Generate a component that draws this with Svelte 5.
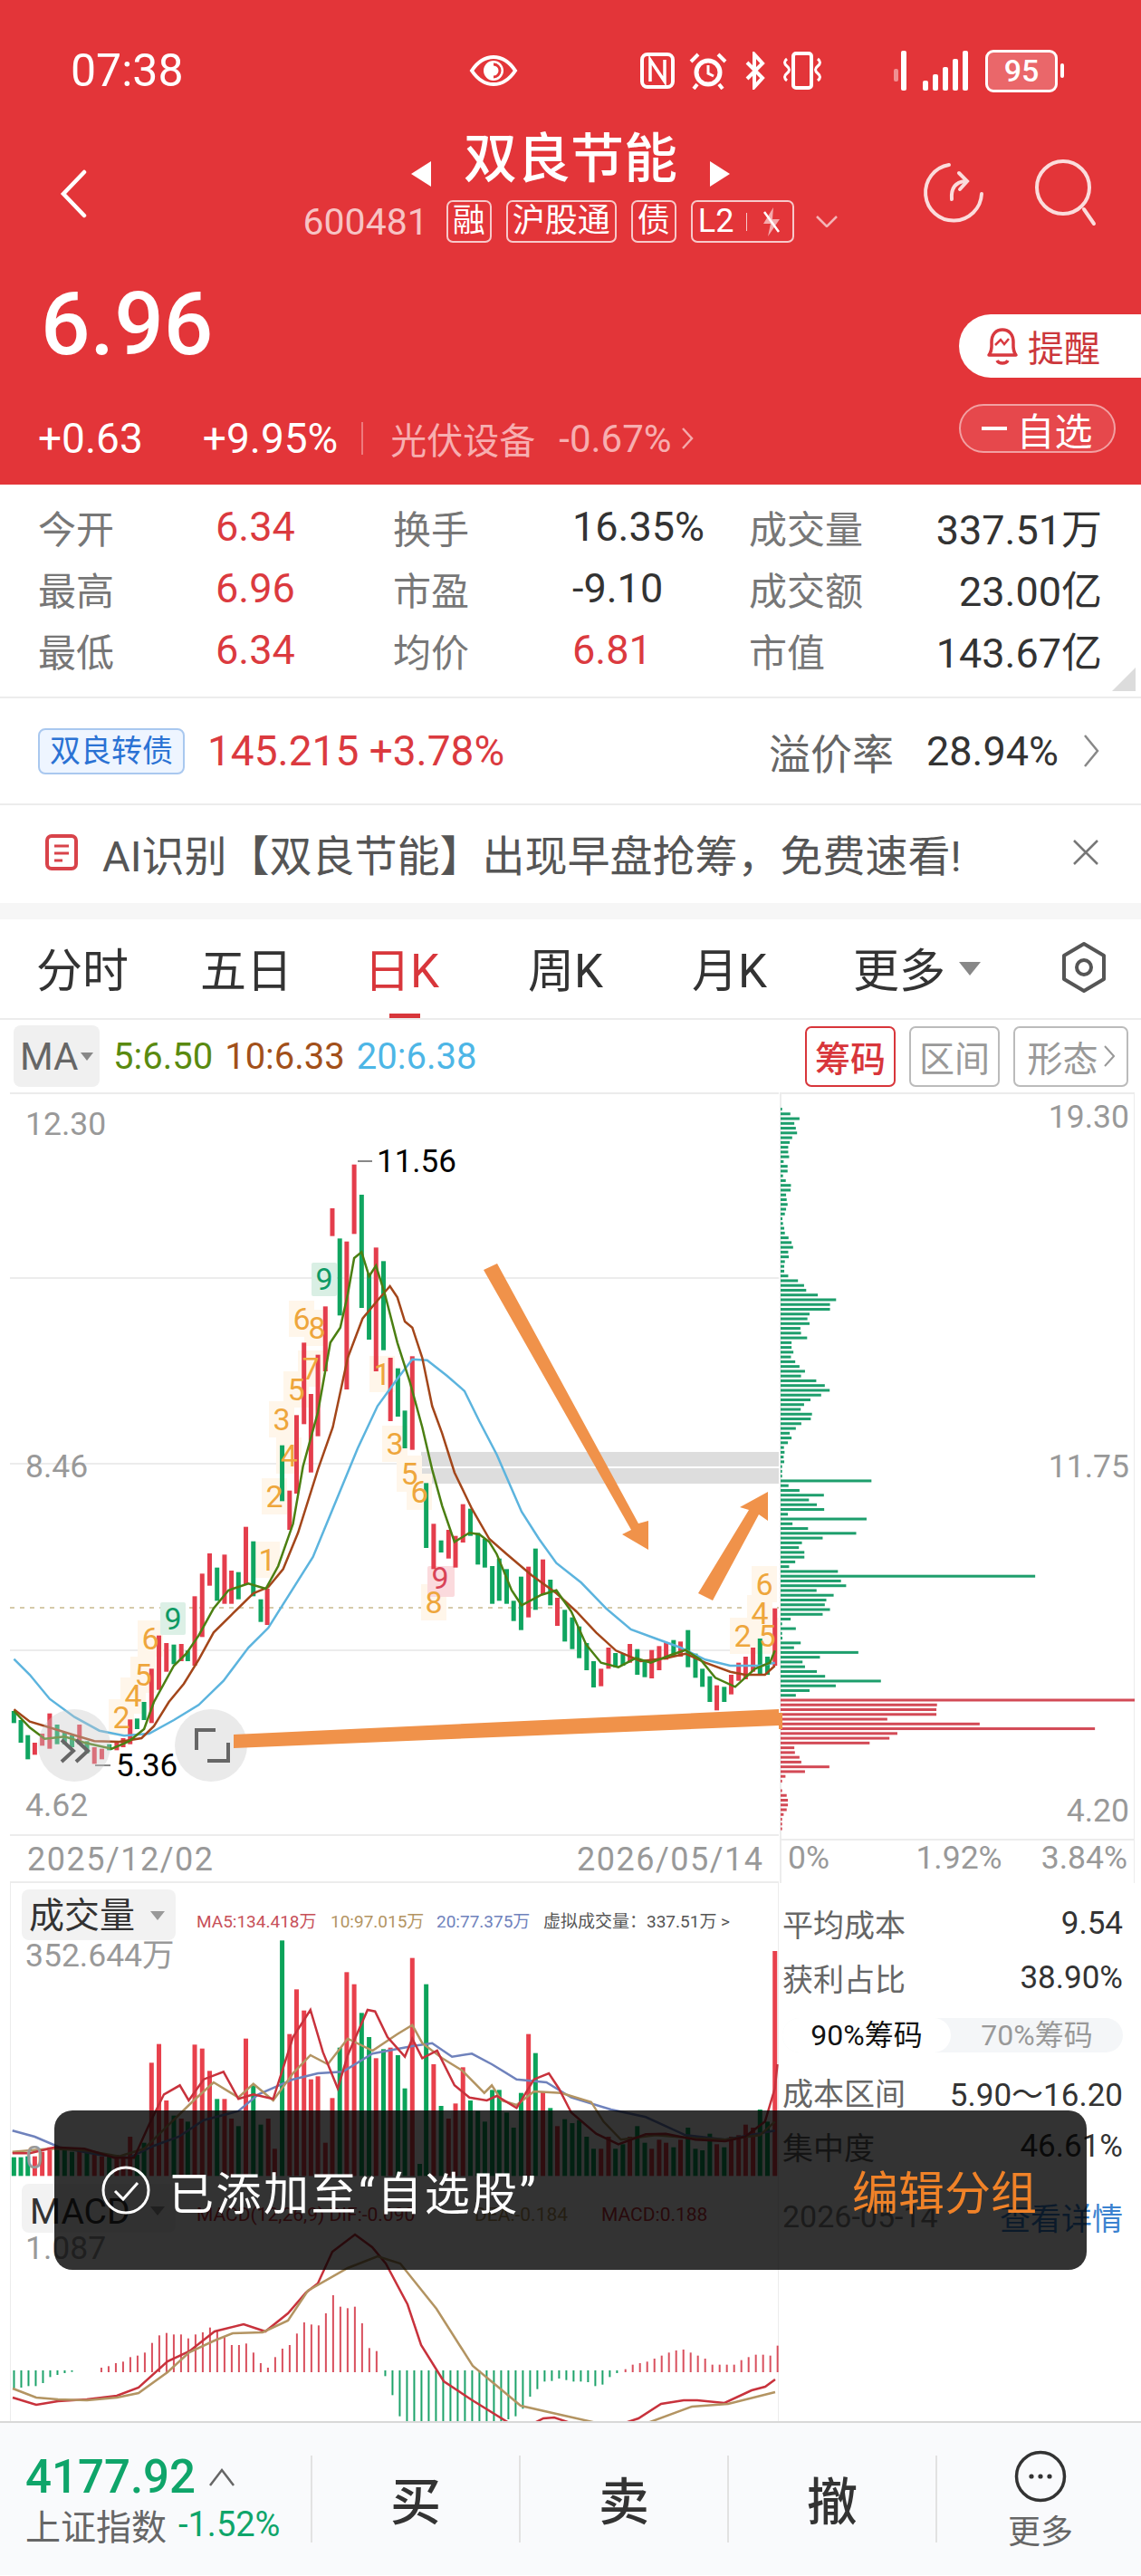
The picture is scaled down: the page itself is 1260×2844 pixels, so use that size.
<script>
	// chart data read off the reference. candle/volume x,y are kept in crop units and scaled below
	const XS = 1.823;
	const candleRaw =
		'g28,570,610 g42,600,675 g56,650,730 r70,675,715 r85,645,685 r100,578,695 g115,615,680 g130,640,680 g145,650,690 r160,615,680 g175,670,710 r190,690,745 r205,695,730 g220,680,700 r235,670,700 r248,660,690 r262,598,680 g276,595,630 g290,540,600 r305,430,610 r320,320,500 r335,345,440 g350,350,415 r365,348,405 g378,370,405 r392,190,420 r407,115,325 r422,48,155 g437,95,205 r452,52,215 r466,105,215 g480,110,200 r495,-40,150 g510,8,190 g525,200,275 r538,165,285 ' +
		'g568,-310,-125 r583,-160,-30 r597,-410,-150 r612,-650,-380 r626,-480,-220 r640,-610,-340 r655,-770,-555 r669,-1095,-1003 g684,-995,-740 r698,-985,-495 r713,-1240,-1010 g728,-1140,-765 g743,-880,-660 r757,-965,-555 g772,-920,-625 r786,-600,-390 g801,-565,-405 g815,-425,-300 r830,-605,-295 g858,-185,30 r873,-50,100 g888,5,45 r903,-30,65 r917,-10,95 r932,-115,12 g947,-100,-10 ' +
		'g962,-20,85 g976,0,95 g991,90,215 g1005,65,205 g1020,100,215 g1034,205,272 g1049,125,302 r1064,92,260 g1078,32,235 r1093,68,185 g1108,135,220 r1122,195,288 g1137,235,340 g1152,260,365 g1166,290,395 g1181,345,435 g1195,405,492 r1210,430,488 r1225,360,430 g1239,378,425 g1254,380,420 r1268,348,410 g1283,365,450 g1298,400,458 r1312,368,462 r1327,355,435 r1341,342,400 g1356,335,390 r1370,340,390 g1385,302,425 g1400,380,460 g1414,430,490 g1429,455,540 r1443,485,568 g1458,490,540 r1472,450,515 r1487,410,470 r1501,390,465 r1516,360,440 g1530,330,450 g1545,390,450 r1560,230,420';

	const candles = candleRaw.split(' ').map((s) => {
		const [a, b, c] = s.slice(1).split(',').map(Number);
		return { up: s[0] === 'r', x: a / XS - 2.5, y: 1700 + b / 3, h: (c - b) / 3 };
	});

	const kline = (pts) => pts.map(([x, y]) => `${(x / XS).toFixed(1)},${(1700 + y / 3).toFixed(1)}`).join(' ');
	const vline = (pts) => pts.map(([x, y]) => `${(x / XS).toFixed(1)},${(2080 + y / 3).toFixed(1)}`).join(' ');
	const plain = (pts) => pts.map((p) => p.join(',')).join(' ');

	const ma20 = kline([[28,398],[60,450],[100,530],[150,590],[200,635],[250,652],[300,645],[350,600],[400,550],[450,470],[500,360],[540,295],[580,190],[630,60],[670,-100],[720,-300],[760,-440],[800,-530],[830,-595],[860,-592],[900,-540],[935,-490],[965,-390],[1000,-280],[1050,-90],[1085,0],[1120,80],[1170,145],[1220,230],[1270,300],[1320,330],[1370,360],[1420,400],[1470,420],[1530,420],[1560,410]]);
	const ma10 = kline([[28,565],[60,605],[100,625],[150,650],[190,670],[240,672],[285,660],[310,620],[340,540],[370,480],[400,400],[430,310],[470,245],[510,180],[540,160],[570,100],[600,-20],[640,-230],[670,-370],[700,-600],[730,-730],[760,-790],[785,-837],[800,-800],[815,-720],[830,-700],[850,-600],[870,-440],[890,-350],[915,-220],[950,-100],[985,0],[1020,50],[1070,120],[1120,180],[1160,240],[1200,310],[1240,370],[1290,405],[1340,395],[1380,380],[1420,410],[1470,440],[1500,450],[1540,450],[1560,420]]);
	const ma5 = kline([[28,570],[60,625],[90,662],[130,655],[170,675],[225,695],[260,670],[290,630],[310,540],[350,420],[375,380],[400,320],[430,230],[460,170],[500,148],[535,165],[560,90],[590,-50],[610,-240],[640,-420],[665,-650],[685,-700],[700,-810],[713,-930],[728,-950],[743,-870],[757,-905],[775,-810],[800,-650],[825,-520],[850,-370],[870,-230],[890,-110],[915,10],[945,-20],[965,-15],[985,10],[1000,50],[1030,170],[1050,220],[1090,185],[1120,170],[1150,240],[1180,350],[1210,410],[1245,425],[1280,395],[1310,410],[1350,385],[1380,368],[1410,400],[1440,460],[1480,490],[1520,430],[1550,410],[1560,370]]);

	// sequence numbers sitting on the candles: [x, y, text]
	const marks = [
		[295,1723,'1'],[303,1653,'2'],[311,1568,'3'],[319,1608,'4'],[327,1535,'5'],[343,1512,'7'],[333,1457,'6'],[350,1467,'8'],
		[422,1518,'1'],[436,1595,'3'],[452,1628,'5'],[463,1648,'6'],[479,1770,'8'],
		[166,1810,'6'],[158,1850,'5'],[147,1873,'4'],[134,1897,'2'],
		[844,1750,'6'],[839,1782,'4'],[847,1807,'5'],[820,1807,'2']
	];

	const chipGreen = [5,32,62,45,50,54,38,30,25,25,28,10,23,23,8,17,34,33,18,20,23,18,14,6,8,12,14,26,36,41,25,27,14,12,12,25,57,77,84,122,182,162,162,95,88,95,65,67,87,36,36,42,34,48,62,80,67,117,145,161,133,98,77,66,103,99,68,50,30,36,24,11,13,10,12,5,5,5,298,26,62,142,93,119,143,24,282,39,90,248,138,70,60,78,78,48,28,188,835,198,215,118,174,150,145,162,138,33,5,50,5,6,66,44,255,129,72,80,119,146,329,181,95,50];
	const chipRed = [1163,513,511,511,350,653,1031,383,357,292,45,47,62,68,160,80,16,5,0,5,20,24,24,20,10,5,5,5];
	const chips = [...chipGreen.map((w) => ({ w, up: false })), ...chipRed.map((w) => ({ w, up: true }))].map((c, i) => ({
		...c,
		y: 1224 + i * 5.262,
		w: c.w / 2.97
	}));

	const volRaw =
		'g28,908 g42,908 g56,905 r70,905 r85,890 r100,875 g115,880 g130,880 g145,890 r160,880 g175,890 r190,900 r205,905 g220,905 r235,900 r248,905 r262,840 g276,900 g290,860 r305,595 r320,533 r335,720 g350,770 r365,780 g378,790 r392,535 r407,548 r422,622 g437,715 r452,715 r466,780 g480,805 r495,515 g510,670 g525,800 r540,780 r553,880 g568,190 r583,500 r597,352 r612,422 r626,650 r640,640 r655,860 r669,712 g684,545 r698,295 r713,335 g728,430 g743,510 r757,580 g772,550 r786,545 g801,570 g815,680 r830,248 g845,930 g858,335 r873,600 g888,738 r903,780 r917,730 r932,610 g947,720 g962,755 g976,790 g991,685 g1005,685 g1020,760 g1034,810 g1049,695 r1064,500 g1078,563 r1093,690 g1108,745 r1122,805 g1137,782 g1152,795 g1166,785 g1181,840 g1195,880 r1210,880 r1225,840 g1239,880 g1254,865 r1268,840 g1283,805 g1298,860 r1312,880 r1327,850 r1341,860 g1356,875 r1370,850 g1385,810 g1400,880 g1414,885 g1429,830 r1443,865 g1458,875 r1472,840 r1487,835 r1501,800 r1516,810 g1530,750 g1545,790 r1560,225';
	const vols = volRaw.split(' ').map((s) => {
		const [a, b] = s.slice(1).split(',').map(Number);
		return { up: s[0] === 'r', x: a / XS - 2.5, y: 2080 + b / 3, h: (970 - b) / 3 };
	});
	const volMa5 = vline([[25,895],[60,895],[110,875],[170,880],[230,910],[270,910],[300,800],[330,700],[362,670],[380,720],[410,650],[450,625],[480,715],[510,700],[550,715],[590,510],[625,420],[650,560],[680,680],[700,570],[740,420],[755,425],[780,510],[815,575],[830,515],[850,580],[880,555],[915,670],[945,710],[980,720],[1000,705],[1040,745],[1075,650],[1105,630],[1125,680],[1150,760],[1200,830],[1245,865],[1300,832],[1340,830],[1400,850],[1460,855],[1500,840],[1540,790],[1560,680],[1565,600]]);
	const volMa10 = vline([[25,890],[100,880],[170,885],[240,905],[290,880],[340,800],[390,720],[430,660],[480,710],[510,665],[550,720],[590,630],[625,570],[660,600],[700,515],[750,555],[800,500],[830,470],[850,530],[890,580],[930,620],[975,695],[990,670],[1010,720],[1040,735],[1075,690],[1130,695],[1190,725],[1215,790],[1250,850],[1320,835],[1400,845],[1460,850],[1530,835],[1560,790]]);
	const volMa20 = vline([[25,820],[70,840],[120,875],[200,900],[260,910],[310,870],[360,840],[410,785],[480,755],[520,700],[590,650],[640,630],[690,625],[750,565],[830,540],[870,530],[910,575],[950,565],[990,600],[1040,650],[1100,660],[1150,710],[1230,750],[1300,775],[1380,835],[1460,850],[1560,820]]);

	// macd histogram: bar ends in crop units, 8px apart
	const histDown = [[18,[415,410,405,405,395,375,368,362,358,353]],[528,[372,435,505,550,550,550,550,550,550,550,550,550,540,535,530,530,525,515,505,480,440,415,390,388,380,385,390,390,392,405,400,375,362]]];
	const histUp = [[138,[345,340,330,325,310,305,295,263,238,230,235,235,248,235,228,212,222,242,270,270,265,295,330,345,310,282,270,232,195,202,205,165,105,143,148,143,198,280,290]],[858,[350,335,330,325,315,305,295,288,285,295,305,315,335,335,335,335,320,310,302,302,305,272]]];
	const hist = [];
	for (const [start, ends] of histDown) ends.forEach((e, i) => hist.push({ up: false, x: (start + i * 9.95) / 1.244, y: 2618, h: (e - 353) / 3 }));
	for (const [start, ends] of histUp) ends.forEach((e, i) => hist.push({ up: true, x: (start + i * 9.95) / 1.244, y: 2500 + e / 3, h: (360 - e) / 3 }));

	const dif = plain([[14,2648],[40,2656],[64,2652],[96,2650],[129,2646],[153,2637],[185,2608],[209,2597],[237,2575],[269,2567],[293,2575],[318,2555],[338,2532],[351,2522],[367,2487],[392,2468],[411,2482],[426,2500],[450,2545],[465,2590],[490,2630],[520,2650],[562,2676],[590,2676],[600,2671],[612,2670],[630,2676],[690,2676],[705,2671],[730,2655],[755,2651],[770,2651],[800,2654],[830,2640],[845,2636],[856,2628]]);
	const dea = plain([[14,2638],[40,2648],[64,2650],[96,2651],[129,2648],[153,2643],[185,2620],[209,2598],[237,2585],[257,2577],[290,2576],[318,2563],[340,2530],[384,2505],[417,2492],[442,2500],[482,2550],[522,2613],[575,2657],[619,2667],[659,2676],[715,2676],[764,2658],[804,2655],[856,2642]]);

	const stats = [
		['今开', '6.34', true, '换手', '16.35%', false, '成交量', '337.51万'],
		['最高', '6.96', true, '市盈', '-9.10', false, '成交额', '23.00亿'],
		['最低', '6.34', true, '均价', '6.81', true, '市值', '143.67亿']
	];
	const tabs = ['分时', '五日', '日K', '周K', '月K'];
</script>

<div class="page">
	<header class="top">
		<div class="status">
			<span class="clock">07:38</span>
			<svg class="eye" width="54" height="36" viewBox="0 0 54 36" fill="none" stroke="#fff" stroke-width="4">
				<path d="M3 18 C11 6 19 3 27 3 C35 3 43 6 51 18 C43 30 35 33 27 33 C19 33 11 30 3 18Z" />
				<circle cx="27" cy="18" r="11" fill="#fff" stroke="none" />
				<path d="M27 11 a7 7 0 0 1 0 14" stroke="#e33539" stroke-width="3" />
			</svg>
			<svg class="nfc" width="38" height="40" viewBox="0 0 38 40" fill="none" stroke="#fff" stroke-width="4">
				<rect x="2" y="2" width="34" height="36" rx="6" />
				<path d="M11 32 V8 L27 32 V8" stroke-width="3.5" />
			</svg>
			<svg class="alarm" width="44" height="42" viewBox="0 0 44 42" fill="none" stroke="#fff" stroke-width="5">
				<circle cx="22" cy="23" r="13" />
				<path d="M22 15 V24 L28 27" stroke-width="3" />
				<path d="M3 11 L11 3 M33 3 L41 11 M10 36 L6 41 M34 36 L38 41" stroke-width="4" />
			</svg>
			<svg class="bt" width="24" height="42" viewBox="0 0 24 42" fill="none" stroke="#fff" stroke-width="4">
				<path d="M3 12 L20 29 L11 39 V3 L20 13 L3 30" />
			</svg>
			<svg class="vib" width="50" height="42" viewBox="0 0 50 42" fill="none" stroke="#fff" stroke-width="3">
				<rect x="15" y="2" width="20" height="38" rx="3" stroke-width="4" />
				<path d="M8 8 q-5 4 0 8 q5 4 0 8 q-5 4 0 8 M42 8 q5 4 0 8 q-5 4 0 8 q5 4 0 8" />
			</svg>
			<svg class="sim" width="16" height="44" viewBox="0 0 16 44" fill="#fff">
				<rect x="9" y="0" width="6" height="44" rx="2" />
				<rect x="1" y="20" width="5" height="14" rx="2" opacity=".45" />
			</svg>
			<svg class="signal" width="50" height="44" viewBox="0 0 50 44" fill="#fff">
				<rect x="0" y="33" width="6" height="11" rx="2" />
				<rect x="11" y="26" width="6" height="18" rx="2" />
				<rect x="22" y="18" width="6" height="26" rx="2" />
				<rect x="33" y="9" width="6" height="35" rx="2" />
				<rect x="44" y="0" width="6" height="44" rx="2" />
			</svg>
			<div class="battery"><span>95</span></div>
			<i class="battery-tip"></i>
		</div>

		<div class="nav">
			<div class="nav-left">
				<svg width="32" height="54" viewBox="0 0 32 54" fill="none" stroke="#fff" stroke-width="4.5" stroke-linecap="round">
					<path d="M28 3 L5 27 L28 51" />
				</svg>
			</div>
			<div class="nav-mid">
				<div class="title-row">
					<svg width="22" height="28" viewBox="0 0 22 28" fill="#fff"><path d="M22 0 V28 L0 14Z" /></svg>
					<span class="title">双良节能</span>
					<svg width="22" height="28" viewBox="0 0 22 28" fill="#fff"><path d="M0 0 V28 L22 14Z" /></svg>
				</div>
				<div class="code-row">
					<span class="code">600481</span>
					<span class="tag">融</span>
					<span class="tag">沪股通</span>
					<span class="tag">债</span>
					<span class="tag l2">
						L2<i></i>
						<svg width="26" height="34" viewBox="0 0 26 34">
							<path d="M15 1 L4 19 H12 L9 33 L22 14 H14 Z" fill="#f4a9ab" />
							<path d="M5 6 L21 28" stroke="#fff" stroke-width="2.5" />
						</svg>
					</span>
					<svg class="code-caret" width="24" height="13" viewBox="0 0 24 13" fill="none" stroke="#f4b4b6" stroke-width="2.5"><path d="M1 1 L12 12 L23 1" /></svg>
				</div>
			</div>
			<div class="nav-right">
				<svg width="70" height="70" viewBox="0 0 70 70" fill="none" stroke="#fbdcdc" stroke-width="4" stroke-linecap="round">
					<path d="M30 4 A31 31 0 1 0 66 36" />
					<path d="M33 42 C32 30 37 23 48 22" />
					<path d="M41 13 L50 22 L42 31" />
				</svg>
				<svg width="72" height="76" viewBox="0 0 72 76" fill="none" stroke="#fbdcdc" stroke-width="4" stroke-linecap="round">
					<circle cx="32" cy="32" r="29" />
					<path d="M55 56 L66 72" />
				</svg>
			</div>
		</div>

		<div class="quote">
			<div>
				<div class="price">6.96</div>
				<div class="change">
					<span class="c1">+0.63</span>
					<span class="c2">+9.95%</span>
					<i class="bar"></i>
					<span class="sector">光伏设备</span>
					<span class="sector-chg">-0.67%</span>
					<svg width="14" height="26" viewBox="0 0 14 26" fill="none" stroke="#f4a9ab" stroke-width="2.5"><path d="M2 2 L12 13 L2 24" /></svg>
				</div>
			</div>
			<div class="actions">
				<div class="remind">
					<svg width="40" height="44" viewBox="0 0 40 44" fill="none" stroke="#d8393f" stroke-width="3.5">
						<path d="M5 32 C9 27 8 22 8 18 C8 9 13 4 20 4 C27 4 32 9 32 18 C32 22 31 27 35 32 Z" stroke-linejoin="round" />
						<path d="M12 21 L18 15 L22 20 L27 14" stroke-width="2.5" />
						<path d="M14 38 C16 42 24 42 26 38" />
					</svg>
					<span>提醒</span>
				</div>
				<div class="fav"><i></i><span>自选</span></div>
			</div>
		</div>
	</header>

	<section class="stats">
		{#each stats as row}
			<div class="stat-row">
				<span class="lab">{row[0]}</span>
				<span class="val red">{row[1]}</span>
				<span class="lab">{row[3]}</span>
				<span class="val" class:red={row[5]}>{row[4]}</span>
				<span class="lab">{row[6]}</span>
				<span class="val end">{row[7]}</span>
			</div>
		{/each}
		<i class="corner"></i>
	</section>

	<section class="bond">
		<span class="bond-tag">双良转债</span>
		<span class="bond-price">145.215 +3.78%</span>
		<span class="bond-lab">溢价率</span>
		<span class="bond-rate">28.94%</span>
		<svg width="20" height="40" viewBox="0 0 20 40" fill="none" stroke="#888" stroke-width="2.5"><path d="M3 3 L17 20 L3 37" /></svg>
	</section>

	<section class="notice">
		<svg width="38" height="42" viewBox="0 0 38 42" fill="none" stroke="#d8434a" stroke-width="4">
			<rect x="3" y="3" width="32" height="36" rx="5" />
			<path d="M11 14 H27 M11 22 H27 M11 30 H20" stroke-width="3" />
		</svg>
		<span class="notice-text">AI识别【双良节能】出现早盘抢筹，免费速看!</span>
		<svg class="close" width="32" height="32" viewBox="0 0 32 32" stroke="#777" stroke-width="2.5"><path d="M3 3 L29 29 M29 3 L3 29" /></svg>
	</section>

	<nav class="tabs">
		{#each tabs as tab, i}
			<span class="tab" class:on={i === 2}>{tab}</span>
		{/each}
		<span class="tab more">更多<i class="caret big"></i></span>
		<svg class="gear" width="50" height="58" viewBox="0 0 50 58" fill="none" stroke="#555" stroke-width="4">
			<path d="M25 3 L47 16 V42 L25 55 L3 42 V16 Z" stroke-linejoin="round" />
			<circle cx="25" cy="29" r="8" />
		</svg>
		<i class="tab-mark"></i>
	</nav>

	<div class="tool-row">
		<span class="ma-chip">MA<i class="caret"></i></span>
		<span class="ma ma5">5:6.50</span>
		<span class="ma ma10">10:6.33</span>
		<span class="ma ma20">20:6.38</span>
		<div class="tools">
			<span class="tool on">筹码</span>
			<span class="tool">区间</span>
			<span class="tool wide">形态<svg width="12" height="26" viewBox="0 0 12 26" fill="none" stroke="#999" stroke-width="2"><path d="M1 2 L11 13 L1 24" /></svg></span>
		</div>
	</div>

	<div class="chart-row">
		<svg class="canvas" width="849" height="873" viewBox="11 1207 849 873">
			<g stroke="#ececec" stroke-width="2">
				<path d="M11 1208 H860 M11 1412 H860 M11 1617 H860 M11 1823 H860 M11 2027 H860 M11 2079 H860" />
			</g>
			<path d="M11 1776 H860" stroke="#c9b98e" stroke-width="1.5" stroke-dasharray="5 6" />
			<rect x="465" y="1604" width="395" height="16" fill="#dddddd" />
			<rect x="465" y="1622" width="395" height="17" fill="#dddddd" />

			<text class="axis" x="28" y="1254">12.30</text>
			<text class="axis" x="28" y="1632">8.46</text>
			<text class="axis" x="28" y="2006">4.62</text>
			<text class="date" x="30" y="2066">2025/12/02</text>
			<text class="date" x="637" y="2066">2026/05/14</text>

			{#each marks as [x, y]}
				<rect x={x - 14} y={y - 20} width="28" height="40" fill="#fff6ea" />
			{/each}
			<rect x="344" y="1395" width="28" height="37" rx="2" fill="#d9efe4" />
			<rect x="177" y="1770" width="28" height="36" rx="2" fill="#dcf0e6" />
			<rect x="472" y="1730" width="30" height="34" rx="2" fill="#fbdadd" />

			{#each candles as c}
				<rect x={c.x} y={c.y} width="5" height={c.h} fill={c.up ? '#e43d4c' : '#10a560'} />
			{/each}

			{#each marks as [x, y, t]}
				<text class="mark" x={x} y={y + 12} text-anchor="middle">{t}</text>
			{/each}
			<text class="mark green" x="358" y="1425" text-anchor="middle">9</text>
			<text class="mark green" x="191" y="1800" text-anchor="middle">9</text>
			<text class="mark pink" x="486" y="1755" text-anchor="middle">9</text>

			<polyline points={ma20} fill="none" stroke="#5cb4de" stroke-width="2.5" />
			<polyline points={ma10} fill="none" stroke="#a3461a" stroke-width="2.5" />
			<polyline points={ma5} fill="none" stroke="#4b7f12" stroke-width="2.5" />

			<path d="M395 1283 H411 M105 1950 H122" stroke="#888" stroke-width="2" />
			<text class="peak" x="416" y="1295">11.56</text>
			<text class="peak" x="128" y="1962">5.36</text>

			<circle cx="82" cy="1928" r="40" fill="#c8c8c8" fill-opacity=".38" />
			<circle cx="233" cy="1928" r="40" fill="#c8c8c8" fill-opacity=".38" />
			<path d="M68 1922 L81 1934 L68 1946 M84 1922 L97 1934 L84 1946" stroke="#666" stroke-width="4" fill="none" />
			<path d="M217 1933 V1911 H238 M252 1925 V1945 H229" stroke="#666" stroke-width="4" fill="none" />

			<polygon points="534,1403 549,1396 705,1683 716,1680 716,1712 687,1695 697,1690" fill="#f0924a" />
			<polygon points="771,1760 787,1768 838,1673 848,1680 848,1648 817,1665 827,1668" fill="#f0924a" />
			<polygon points="258,1916 860,1888 860,1906 258,1931" fill="#f0924a" />
		</svg>
		<svg class="canvas" width="393" height="873" viewBox="860 1207 393 873">
			<path d="M862 1207 V2080 M1253 1207 V2080 M862 1208 H1253 M862 2032 H1253 M862 2086 H1253" stroke="#ececec" stroke-width="2" fill="none" />
			{#each chips as c}
				<rect x="862" y={c.y} width={c.w} height="3" fill={c.up ? '#d34a56' : '#1d9e6c'} />
			{/each}
			<polygon points="860,1892 864,1892 864,1910 860,1910" fill="#f0924a" />
			<text class="axis" x="1247" y="1246" text-anchor="end">19.30</text>
			<text class="axis" x="1247" y="1632" text-anchor="end">11.75</text>
			<text class="axis" x="1247" y="2012" text-anchor="end">4.20</text>
			<text class="axis" x="870" y="2064">0%</text>
			<text class="axis" x="1059" y="2064" text-anchor="middle">1.92%</text>
			<text class="axis" x="1245" y="2064" text-anchor="end">3.84%</text>
		</svg>
	</div>

	<div class="lower-row">
		<svg class="canvas" width="849" height="594" viewBox="11 2080 849 594">
			<path d="M11 2080 V2674 M860 2080 V2674" stroke="#ececec" stroke-width="2" />
			{#each vols as v}
				<rect x={v.x} y={v.y} width="5" height={v.h} fill={v.up ? '#e8404c' : '#0ba35a'} />
			{/each}
			<polyline points={volMa20} fill="none" stroke="#6f82bc" stroke-width="2.5" />
			<polyline points={volMa10} fill="none" stroke="#b39462" stroke-width="2.5" />
			<polyline points={volMa5} fill="none" stroke="#c8323c" stroke-width="2.5" />

			<rect x="24" y="2087" width="170" height="56" rx="8" fill="#f2f2f2" />
			<text class="chip-text" x="32" y="2129">成交量</text>
			<polygon points="166,2111 182,2111 174,2121" fill="#999" />
			<text class="axis" x="28" y="2172">352.644万</text>
			<text class="mini" x="217" y="2129" fill="#c75059">MA5:134.418万</text>
			<text class="mini" x="365" y="2129" fill="#b39462">10:97.015万</text>
			<text class="mini" x="482" y="2129" fill="#6f82bc">20:77.375万</text>
			<text class="mini" x="600" y="2129" fill="#555">虚拟成交量：337.51万 &gt;</text>

			<text class="axis" x="28" y="2395">0</text>

			<rect x="24" y="2412" width="170" height="54" rx="8" fill="#f2f2f2" />
			<text class="chip-text" x="33" y="2456">MACD</text>
			<polygon points="166,2437 182,2437 174,2447" fill="#999" />
			<text class="axis" x="28" y="2495">1.087</text>
			<text class="mini wide" x="217" y="2453" fill="#c8323c">MACD(12,26,9) DIF:-0.090</text>
			<text class="mini wide" x="524" y="2453" fill="#b39462">DEA:-0.184</text>
			<text class="mini wide" x="664" y="2453" fill="#c8323c">MACD:0.188</text>

			{#each hist as h}
				<rect x={h.x} y={h.y} width="2" height={h.h} fill={h.up ? '#d9505e' : '#1ea36b'} />
			{/each}
			<polyline points={dif} fill="none" stroke="#c8323c" stroke-width="2.5" />
			<polyline points={dea} fill="none" stroke="#b39462" stroke-width="2.5" />
		</svg>
		<aside class="cost">
			<div class="cost-line"><span>平均成本</span><b>9.54</b></div>
			<div class="cost-line"><span>获利占比</span><b>38.90%</b></div>
			<div class="switch"><span class="sel">90%筹码</span><span>70%筹码</span></div>
			<div class="cost-line"><span>成本区间</span><b>5.90～16.20</b></div>
			<div class="cost-line"><span>集中度</span><b>46.61%</b></div>
			<div class="cost-line foot"><span>2026-05-14</span><em>查看详情</em></div>
		</aside>
	</div>

	<footer class="bottom">
		<div class="index">
			<div class="index-top">
				<span class="index-num">4177.92</span>
				<svg width="30" height="22" viewBox="0 0 30 22" fill="none" stroke="#666" stroke-width="2.5"><path d="M2 20 L15 3 L28 20" /></svg>
			</div>
			<div class="index-sub"><span>上证指数</span><b>-1.52%</b></div>
		</div>
		<div class="act"><span>买</span></div>
		<div class="act"><span>卖</span></div>
		<div class="act"><span>撤</span></div>
		<div class="act more-btn">
			<svg width="58" height="58" viewBox="0 0 58 58" fill="none" stroke="#333" stroke-width="3.5">
				<circle cx="29" cy="29" r="26.5" />
				<g fill="#333" stroke="none"><circle cx="19" cy="29" r="2.6" /><circle cx="29" cy="29" r="2.6" /><circle cx="39" cy="29" r="2.6" /></g>
			</svg>
			<small>更多</small>
		</div>
	</footer>

	<div class="toast">
		<svg width="54" height="54" viewBox="0 0 54 54" fill="none" stroke="#fff" stroke-width="3">
			<circle cx="27" cy="27" r="25" />
			<path d="M15 28 L24 37 L40 19" />
		</svg>
		<span class="toast-text">已添加至“自选股”</span>
		<span class="toast-link">编辑分组</span>
	</div>
</div>

<style>
	:global(body) {
		margin: 0;
		background: #fff;
	}

	.page {
		position: relative;
		width: 1260px;
		height: 2844px;
		overflow: hidden;
		background: #fff;
		font-family: Roboto, 'Noto Sans CJK SC', sans-serif;
		color: #333;
	}

	i {
		display: block;
	}

	/* header */
	.top {
		height: 535px;
		background: #e33539;
		color: #fff;
		box-sizing: border-box;
	}

	.status {
		height: 141px;
		box-sizing: border-box;
		display: flex;
		align-items: center;
		padding: 15px 0 0 78px;
	}

	.status > * {
		flex: none;
	}

	.clock {
		font-size: 50px;
		width: 130px;
		line-height: 1;
	}

	.eye {
		margin-left: 310px;
	}

	.nfc {
		margin-left: 135px;
	}

	.alarm {
		margin-left: 15px;
	}

	.bt {
		margin-left: 18px;
	}

	.vib {
		margin-left: 15px;
	}

	.sim {
		margin-left: 75px;
	}

	.signal {
		margin-left: 17px;
	}

	.battery {
		margin-left: 19px;
		width: 74px;
		height: 41px;
		border: 3px solid #fff;
		border-radius: 9px;
		background: rgba(255, 255, 255, 0.25);
		display: flex;
		align-items: center;
		justify-content: center;
		font-size: 34px;
		font-weight: 500;
	}

	.battery-tip {
		width: 4px;
		height: 16px;
		margin-left: 3px;
		background: #fff;
		border-radius: 2px;
	}

	.nav {
		display: grid;
		grid-template-columns: 1fr auto 1fr;
		height: 127px;
		align-items: center;
	}

	.nav-left {
		padding: 22px 0 0 65px;
	}

	.nav-mid {
		display: flex;
		flex-direction: column;
		align-items: center;
	}

	.title-row {
		height: 70px;
		display: flex;
		align-items: center;
		gap: 36px;
	}

	.title-row svg {
		margin-top: 32px;
	}

	.title {
		font-size: 59px;
		font-weight: 500;
		line-height: 70px;
	}

	.code-row {
		display: flex;
		align-items: center;
		gap: 16px;
		height: 47px;
		margin-top: 10px;
	}

	.code {
		font-size: 41px;
		color: #f7c3c4;
		margin-right: 4px;
	}

	.tag {
		height: 47px;
		box-sizing: border-box;
		padding: 0 5px;
		border: 2px solid #f7c9ca;
		border-radius: 7px;
		font-size: 36px;
		line-height: 43px;
		display: flex;
		align-items: center;
		gap: 6px;
		color: #fff;
	}

	.tag.l2 {
		padding: 0 10px 0 6px;
	}

	.tag.l2 i {
		width: 1px;
		height: 20px;
		background: #f7c9ca;
		margin: 0 8px;
	}

	.code-caret {
		margin-left: 8px;
	}

	.nav-right {
		display: flex;
		justify-content: flex-end;
		align-items: center;
		gap: 54px;
		padding: 16px 46px 0 0;
	}

	.quote {
		display: flex;
		justify-content: space-between;
		padding: 42px 0 0 45px;
	}

	.price {
		font-size: 96px;
		line-height: 96px;
		font-weight: 500;
	}

	.change {
		display: flex;
		align-items: center;
		margin: 58px 0 0 -3px;
		height: 40px;
		font-size: 46px;
		white-space: nowrap;
	}

	.c2 {
		margin-left: 66px;
	}

	.bar {
		width: 2px;
		height: 36px;
		background: #ee7a7d;
		margin: 0 30px 0 26px;
	}

	.sector {
		font-size: 40px;
		color: #f7aeb0;
	}

	.sector-chg {
		color: #f7aeb0;
		font-size: 42px;
		margin: 0 10px 0 26px;
	}

	.actions {
		margin-top: 37px;
		width: 201px;
	}

	.remind {
		height: 70px;
		background: #fff;
		border-radius: 35px 0 0 35px;
		display: flex;
		align-items: center;
		gap: 8px;
		padding-left: 28px;
		color: #cc373c;
		font-size: 40px;
	}

	.fav {
		margin-top: 29px;
		width: 173px;
		height: 54px;
		box-sizing: border-box;
		border: 2px solid #f2a0a2;
		border-radius: 27px;
		background: #e6484c;
		display: flex;
		align-items: center;
		justify-content: center;
		gap: 10px;
		font-size: 42px;
	}

	.fav i {
		width: 28px;
		height: 4px;
		background: #fff;
	}

	/* stats */
	.stats {
		position: relative;
		height: 236px;
		box-sizing: border-box;
		padding-top: 12px;
		border-bottom: 2px solid #ececec;
	}

	.stat-row {
		display: grid;
		grid-template-columns: 196px 196px 198px 195px 194px 196px;
		padding-left: 42px;
		height: 68px;
		align-items: center;
	}

	.lab {
		font-size: 42px;
		color: #777;
	}

	.val {
		font-size: 45px;
		color: #333;
		white-space: nowrap;
	}

	.red {
		color: #db3a3f;
	}

	.end {
		text-align: right;
	}

	.corner {
		position: absolute;
		right: 6px;
		bottom: 6px;
		width: 0;
		height: 0;
		border-left: 26px solid transparent;
		border-bottom: 26px solid #dcdcdc;
	}

	.bond {
		height: 118px;
		box-sizing: border-box;
		border-bottom: 2px solid #ececec;
		display: flex;
		align-items: center;
		padding: 0 45px 0 42px;
	}

	.bond-tag {
		width: 162px;
		height: 51px;
		box-sizing: border-box;
		border: 2px solid #a9c8ef;
		border-radius: 8px;
		background: #eef5ff;
		color: #2a72d4;
		font-size: 34px;
		line-height: 47px;
		text-align: center;
	}

	.bond-price {
		margin-left: 25px;
		font-size: 46px;
		color: #db3a3f;
	}

	.bond-lab {
		margin-left: auto;
		font-size: 46px;
		color: #666;
	}

	.bond-rate {
		margin: 0 26px 0 36px;
		font-size: 45px;
		color: #333;
	}

	.notice {
		height: 108px;
		box-sizing: border-box;
		display: flex;
		align-items: center;
		padding: 0 45px 4px 49px;
	}

	.notice-text {
		margin-left: 26px;
		font-size: 47px;
		color: #555;
		white-space: nowrap;
	}

	.close {
		margin-left: auto;
	}

	/* tabs */
	.tabs {
		position: relative;
		margin-top: 18px;
		height: 111px;
		box-sizing: border-box;
		border-bottom: 2px solid #ececec;
		display: flex;
		align-items: center;
		padding: 0 0 4px 40px;
		box-shadow: 0 -18px 0 #f6f6f6;
	}

	.tab {
		width: 181px;
		font-size: 51px;
		color: #333;
		white-space: nowrap;
		flex: none;
	}

	.tab.on {
		color: #d8363b;
	}

	.tab.more {
		display: flex;
		align-items: center;
		gap: 15px;
		width: auto;
		margin-left: -3px;
	}

	.caret {
		width: 0;
		height: 0;
		border-left: 7px solid transparent;
		border-right: 7px solid transparent;
		border-top: 9px solid #888;
	}

	.caret.big {
		border-left-width: 12px;
		border-right-width: 12px;
		border-top-width: 15px;
		margin-top: 4px;
	}

	.gear {
		margin-left: auto;
		margin-right: 38px;
	}

	.tab-mark {
		position: absolute;
		left: 430px;
		bottom: 0;
		width: 34px;
		height: 5px;
		background: #d8363b;
	}

	.tool-row {
		height: 80px;
		display: flex;
		align-items: center;
		padding: 0 14px 0 15px;
	}

	.ma-chip {
		width: 95px;
		height: 68px;
		box-sizing: border-box;
		background: #f0f0f0;
		border-radius: 8px;
		font-size: 42px;
		color: #666;
		display: flex;
		align-items: center;
		padding-left: 7px;
		gap: 3px;
	}

	.ma {
		font-size: 40px;
		margin-left: 13px;
		white-space: nowrap;
	}

	.ma5 {
		margin-left: 15px;
		color: #5a8a10;
	}

	.ma10 {
		color: #a2501a;
	}

	.ma20 {
		color: #4db6e6;
	}

	.tools {
		margin-left: auto;
		display: flex;
		gap: 15px;
	}

	.tool {
		width: 100px;
		height: 67px;
		box-sizing: border-box;
		border: 2px solid #bbb;
		border-radius: 7px;
		color: #999;
		font-size: 39px;
		display: flex;
		align-items: center;
		justify-content: center;
		gap: 6px;
	}

	.tool.on {
		border-color: #d8363b;
		color: #d8363b;
		font-weight: 500;
	}

	.tool.wide {
		width: 127px;
	}

	/* charts */
	.chart-row,
	.lower-row {
		display: flex;
		padding-left: 11px;
	}

	.chart-row {
		height: 873px;
	}

	.lower-row {
		height: 594px;
	}

	.canvas {
		display: block;
		flex: none;
	}

	.axis {
		font-size: 35.5px;
		fill: #999;
	}

	.date {
		font-size: 36px;
		fill: #999;
		letter-spacing: 1.5px;
	}

	.peak {
		font-size: 35px;
		fill: #000;
	}

	.mark {
		font-size: 34px;
		fill: #eea63c;
	}

	.mark.green {
		fill: #0e9a64;
	}

	.mark.pink {
		fill: #d94457;
	}

	.chip-text {
		font-size: 39px;
		fill: #333;
	}

	.mini {
		font-size: 19px;
	}

	.mini.wide {
		font-size: 21px;
	}

	.cost {
		width: 380px;
		box-sizing: border-box;
		padding: 14px 0 0 4px;
	}

	.cost-line {
		height: 60px;
		display: flex;
		align-items: center;
		justify-content: space-between;
		font-size: 34px;
		color: #666;
		white-space: nowrap;
	}

	.cost-line b {
		font-weight: 400;
		font-size: 35px;
		color: #333;
	}

	.cost-line.foot {
		margin-top: 18px;
		color: #888;
	}

	.cost-line em {
		font-style: normal;
		color: #3b82d0;
	}

	.switch {
		margin: 15px 0 13px;
		height: 38px;
		border-radius: 19px;
		background: #f4f6f8;
		display: flex;
		font-size: 32px;
		color: #999;
		align-items: center;
	}

	.switch span {
		flex: 1;
		text-align: center;
		line-height: 38px;
	}

	.switch .sel {
		flex: none;
		width: 186px;
		background: #fff;
		border-radius: 19px;
		color: #111;
	}

	/* bottom bar */
	.bottom {
		height: 170px;
		box-sizing: border-box;
		border-top: 2px solid #d8d8d8;
		background: #f9fafc;
		display: flex;
		align-items: flex-start;
		padding: 36px 0 0 28px;
	}

	.index {
		width: 315px;
		height: 96px;
		flex: none;
	}

	.index-top {
		display: flex;
		align-items: center;
		gap: 14px;
		height: 48px;
	}

	.index-num {
		font-size: 51px;
		font-weight: 500;
		color: #0fa56a;
		line-height: 48px;
	}

	.index-sub {
		display: flex;
		align-items: center;
		gap: 13px;
		margin-top: 0;
		font-size: 39px;
		color: #666;
		white-space: nowrap;
	}

	.index-sub b {
		font-weight: 400;
		font-size: 38px;
		color: #0fa56a;
	}

	.act {
		width: 230px;
		height: 96px;
		flex: none;
		border-left: 2px solid #e2e2e2;
		box-sizing: border-box;
		display: flex;
		align-items: center;
		justify-content: center;
		padding-bottom: 4px;
		font-size: 56px;
		font-weight: 500;
		color: #333;
	}

	.more-btn {
		flex-direction: column;
		justify-content: flex-start;
		font-weight: 400;
		padding-bottom: 0;
	}

	.more-btn svg {
		margin-top: -6px;
		flex: none;
	}

	.more-btn small {
		font-size: 36px;
		color: #666;
		line-height: 42px;
		margin-top: 12px;
		white-space: nowrap;
	}

	/* toast */
	.toast {
		position: absolute;
		left: 60px;
		top: 2330px;
		width: 1140px;
		height: 176px;
		box-sizing: border-box;
		border-radius: 20px;
		background: rgba(0, 0, 0, 0.8);
		display: flex;
		align-items: center;
		padding: 0 55px 0 52px;
	}

	.toast-text {
		margin-left: 20px;
		font-size: 50px;
		letter-spacing: 2.5px;
		color: #fff;
	}

	.toast-link {
		margin-left: auto;
		font-size: 51px;
		color: #f08228;
	}
</style>
